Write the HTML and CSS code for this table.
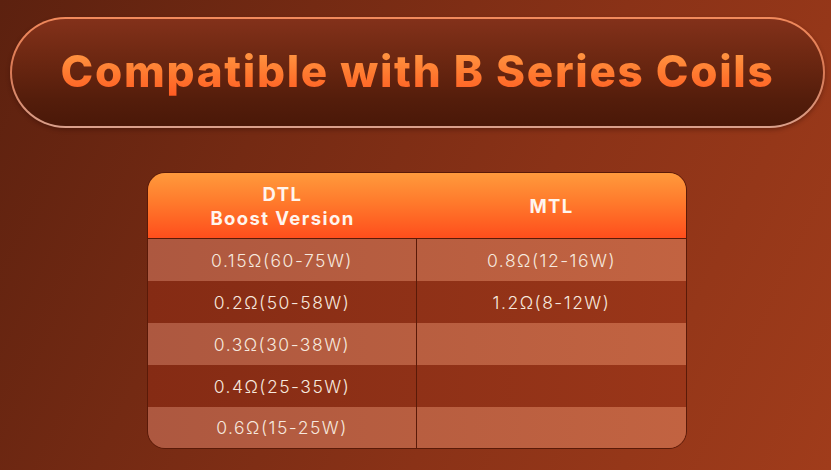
FILE: index.html
```html
<!DOCTYPE html>
<html lang="en">
<head>
<meta charset="utf-8">
<title>Compatible with B Series Coils</title>
<link rel="stylesheet" href="styles.css">
</head>
<body>
<div class="page">
  <div class="banner">
    <h1 class="title">Compatible with B Series Coils</h1>
  </div>
  <div class="table">
    <div class="head">
      <div class="hcell">DTL<br>Boost Version</div>
      <div class="hcell">MTL</div>
    </div>
    <div class="row light">
      <div class="cell left">0.15Ω(60-75W)</div>
      <div class="cell">0.8Ω(12-16W)</div>
    </div>
    <div class="row dark">
      <div class="cell left">0.2Ω(50-58W)</div>
      <div class="cell">1.2Ω(8-12W)</div>
    </div>
    <div class="row light">
      <div class="cell left">0.3Ω(30-38W)</div>
      <div class="cell"></div>
    </div>
    <div class="row dark">
      <div class="cell left">0.4Ω(25-35W)</div>
      <div class="cell"></div>
    </div>
    <div class="row light last">
      <div class="cell left">0.6Ω(15-25W)</div>
      <div class="cell"></div>
    </div>
  </div>
</div>
</body>
</html>
```

FILE: styles.css
```css
* { box-sizing: border-box; }
html, body { margin: 0; padding: 0; }
body {
  width: 831px;
  height: 470px;
  overflow: hidden;
  background: linear-gradient(115deg, #5c210f 0%, #742a13 30%, #8a3217 60%, #a03c1b 100%);
  font-family: "Inter", "Liberation Sans", sans-serif;
}
.page {
  display: flex;
  flex-direction: column;
  align-items: flex-start;
  padding: 17px 0 0 10px;
}
.banner {
  width: 815px;
  height: 111px;
  border-radius: 56px;
  border: 2px solid transparent;
  background:
    linear-gradient(180deg, #83311a 0%, #6e2812 35%, #541d0b 75%, #4a1808 100%) padding-box,
    linear-gradient(180deg, #f28a5c 0%, #d87a56 50%, #d9a08c 100%) border-box;
  box-shadow: 0 2px 4px rgba(40, 10, 0, 0.35);
  display: flex;
  align-items: center;
  justify-content: center;
}
.title {
  margin: 0;
  padding-bottom: 4px;
  font-family: "Inter", "Liberation Sans", sans-serif;
  font-weight: 800;
  font-size: 44px;
  letter-spacing: 1.7px;
  line-height: 1;
  background: linear-gradient(180deg, #ff9a45 0%, #ff7a30 50%, #ff5a22 100%);
  -webkit-background-clip: text;
  background-clip: text;
  color: transparent;
}
.table {
  margin: 44px 0 0 137px;
  width: 540px;
  border: 1.5px solid #5a1a08;
  border-radius: 18px;
  overflow: hidden;
  display: flex;
  flex-direction: column;
}
.head {
  display: grid;
  grid-template-columns: 1fr 1fr;
  height: 66px;
  background: linear-gradient(180deg, #ff9a3c 0%, #ff7a2c 45%, #ff4e1c 100%);
  border-bottom: 1.5px solid #5a1a08;
}
.hcell {
  display: flex;
  align-items: center;
  justify-content: center;
  text-align: center;
  color: #fff5ee;
  font-weight: 700;
  font-size: 18.5px;
  line-height: 24px;
  letter-spacing: 1.4px;
}
.row {
  display: grid;
  grid-template-columns: 1fr 1fr;
  height: 42px;
}
.row.last { height: 41px; }
.light { background: linear-gradient(90deg, #ad5840 0%, #b85e40 50%, #c26341 100%); }
.dark { background: linear-gradient(90deg, #852b14 0%, #8f3117 50%, #9a3619 100%); }
.cell {
  display: flex;
  align-items: center;
  justify-content: center;
  color: #f6e8de;
  font-family: "Inter", "Liberation Sans", sans-serif;
  font-weight: 300;
  font-size: 17.5px;
  letter-spacing: 1.5px;
}
.cell.left { border-right: 1.5px solid #5a1a08; }
```
